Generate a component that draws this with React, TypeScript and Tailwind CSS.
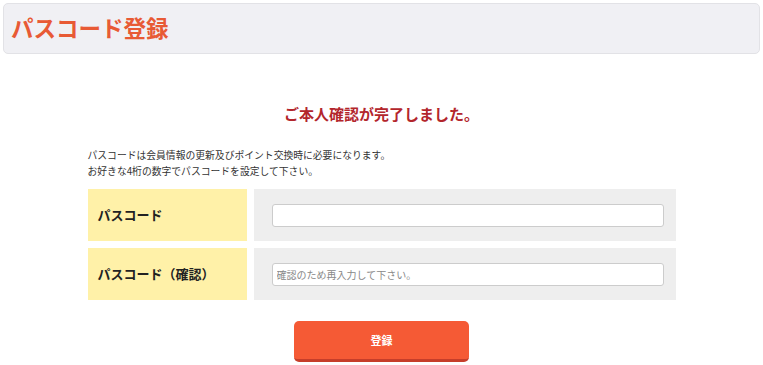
import React from 'react';

const FONT = '"Noto Sans CJK JP", "Noto Sans", "Liberation Sans", sans-serif';

export default function App() {
  return (
    <div className="h-[365px] w-[763px] overflow-hidden bg-white text-[#333]" style={{ fontFamily: FONT }}>
      {/* Page header */}
      <div className="mx-[3px] mt-[3px] flex h-[51px] items-center rounded-[5px] border border-[#e2e2e6] bg-[#f0f0f4] pb-[3px] pl-[7px]">
        <h1 className="text-[22.5px] font-bold leading-none text-[#e85a35]">パスコード登録</h1>
      </div>

      <div className="mx-auto w-[588px]">
        <p className="mt-[50px] text-center text-[15px] font-bold leading-[20px] text-[#b3262c]">
          ご本人確認が完了しました。
        </p>

        <div className="mt-[23px] text-[9.8px] leading-[16px] text-[#333]">
          <p>パスコードは会員情報の更新及びポイント交換時に必要になります。</p>
          <p>お好きな4桁の数字でパスコードを設定して下さい。</p>
        </div>

        {/* Form table */}
        <div className="mt-[10px] flex flex-col gap-[7px]">
          <Row label="パスコード" />
          <Row label="パスコード（確認）" placeholder="確認のため再入力して下さい。" />
        </div>

        <button
          type="button"
          className="mx-auto mt-[21px] flex h-[41px] w-[175px] items-center justify-center rounded-[5px] border-b-[3px] border-[#c63e2a] bg-[#f55a35] text-[11px] font-bold text-white"
          style={{ fontFamily: FONT }}
        >
          登録
        </button>
      </div>
    </div>
  );
}

function Row({ label, placeholder }: { label: string; placeholder?: string }) {
  return (
    <div className="flex h-[52px] gap-[7px]">
      <div className="flex w-[159px] items-center bg-[#fff1a8] pl-[10px] text-[13px] font-bold text-[#222]">{label}</div>
      <div className="flex flex-1 items-center bg-[#eeeeee] pl-[18px] pr-[12px]">
        <input
          type="text"
          placeholder={placeholder}
          className="h-[23px] w-full rounded-[3px] border border-[#cccccc] bg-white px-[4px] text-[10px] placeholder:text-[#888]"
          style={{ fontFamily: FONT }}
        />
      </div>
    </div>
  );
}
